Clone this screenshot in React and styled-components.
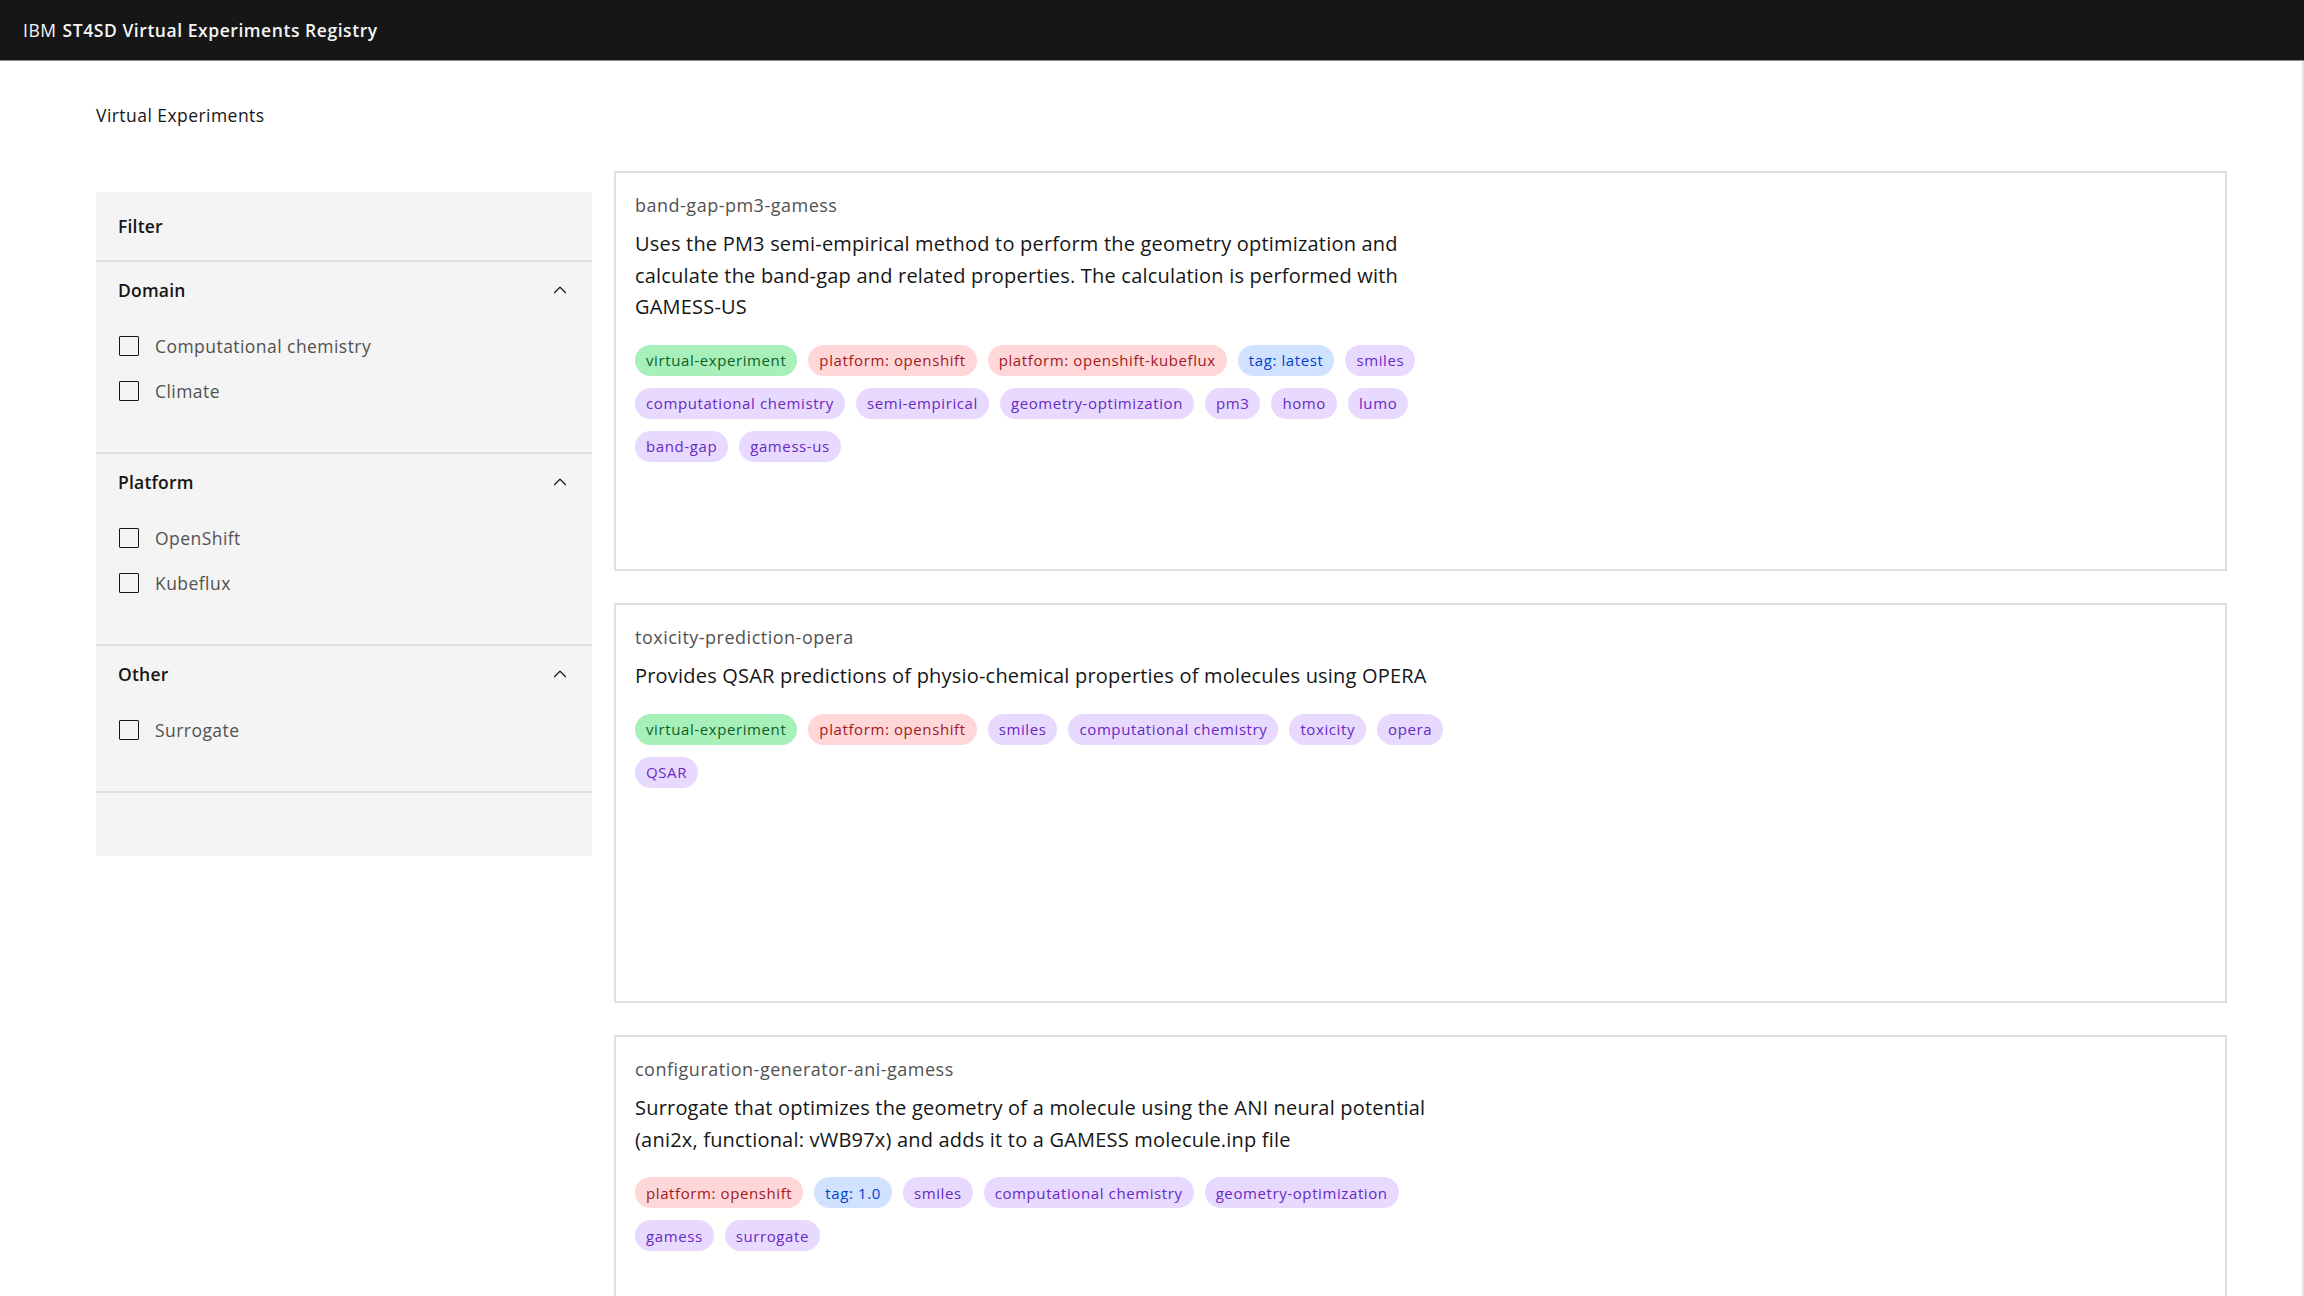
import React from 'react';
import styled, { createGlobalStyle } from 'styled-components';

const GlobalStyle = createGlobalStyle`
  html, body {
    margin: 0;
    padding: 0;
    background: #fff;
    overflow: hidden;
  }
  body {
    font-family: "Open Sans", "Noto Sans", sans-serif;
    color: #161616;
  }
  * { box-sizing: border-box; }
`;

const TAG_COLORS = {
    green: { bg: '#a7f0ba', fg: '#0e6027' },
    red: { bg: '#ffd7d9', fg: '#a2191f' },
    blue: { bg: '#d0e2ff', fg: '#0043ce' },
    purple: { bg: '#e8daff', fg: '#6929c4' },
};

const filters = [
    { title: 'Domain', options: ['Computational chemistry', 'Climate'] },
    { title: 'Platform', options: ['OpenShift', 'Kubeflux'] },
    { title: 'Other', options: ['Surrogate'] },
];

const experiments = [
    {
        name: 'band-gap-pm3-gamess',
        description: 'Uses the PM3 semi-empirical method to perform the geometry optimization and calculate the band-gap and related properties. The calculation is performed with GAMESS-US',
        tags: [
            ['virtual-experiment', 'green'],
            ['platform: openshift', 'red'],
            ['platform: openshift-kubeflux', 'red'],
            ['tag: latest', 'blue'],
            'smiles', 'computational chemistry', 'semi-empirical', 'geometry-optimization',
            'pm3', 'homo', 'lumo', 'band-gap', 'gamess-us',
        ],
    },
    {
        name: 'toxicity-prediction-opera',
        description: 'Provides QSAR predictions of physio-chemical properties of molecules using OPERA',
        tags: [
            ['virtual-experiment', 'green'],
            ['platform: openshift', 'red'],
            'smiles', 'computational chemistry', 'toxicity', 'opera', 'QSAR',
        ],
    },
    {
        name: 'configuration-generator-ani-gamess',
        description: 'Surrogate that optimizes the geometry of a molecule using the ANI neural potential (ani2x, functional: vWB97x) and adds it to a GAMESS molecule.inp file',
        tags: [
            ['platform: openshift', 'red'],
            ['tag: 1.0', 'blue'],
            'smiles', 'computational chemistry', 'geometry-optimization', 'gamess', 'surrogate',
        ],
    },
];

const ChevronUp = () => (
    <svg width="20" height="20" viewBox="0 0 16 16" fill="#161616" aria-hidden="true">
        <path d="M8 5L13 10 12.3 10.7 8 6.4 3.7 10.7 3 10z"/>
    </svg>
);

const App = () => {
    return (
        <>
            <GlobalStyle/>
            <Header>
                <Brand>IBM</Brand>
                <BrandName>ST4SD Virtual Experiments Registry</BrandName>
            </Header>
            <Content>
                <PageTitle>Virtual Experiments</PageTitle>
                <Layout>
                    <Sidebar>
                        <FilterTitle>Filter</FilterTitle>
                        {filters.map(group => (
                            <Section key={group.title}>
                                <SectionHeading>
                                    <span>{group.title}</span>
                                    <IconBox><ChevronUp/></IconBox>
                                </SectionHeading>
                                <SectionBody>
                                    {group.options.map(opt => (
                                        <Option key={opt}>
                                            <Box/>
                                            <OptionLabel>{opt}</OptionLabel>
                                        </Option>
                                    ))}
                                </SectionBody>
                            </Section>
                        ))}
                        <SidebarFooter/>
                    </Sidebar>
                    <CardList>
                        {experiments.map(exp => (
                            <Card key={exp.name}>
                                <CardTitle>{exp.name}</CardTitle>
                                <Description>{exp.description}</Description>
                                <Tags>
                                    {exp.tags.map(t => {
                                        const [label, kind] = Array.isArray(t) ? t : [t, 'purple'];
                                        return <Tag key={label} kind={kind}>{label}</Tag>;
                                    })}
                                </Tags>
                            </Card>
                        ))}
                    </CardList>
                </Layout>
            </Content>
        </>
    );
};

const Header = styled.header`
  height: 61px;
  background: #161616;
  border-bottom: 1px solid #8d8d8d;
  display: flex;
  align-items: center;
  padding-left: 23px;
  color: #f4f4f4;
  font-size: 17.5px;
  letter-spacing: 0.55px;
`;

const Brand = styled.span`
  font-weight: 400;
  margin-right: 6px;
`;

const BrandName = styled.span`
  font-weight: 600;
`;

const Content = styled.main`
  padding: 42px 75px 0 96px;
  border-right: 2px solid #e2e2e2;
  height: calc(100vh - 61px);
`;

const PageTitle = styled.h1`
  margin: 0;
  font-size: 17.5px;
  font-weight: 400;
  line-height: 25px;
  letter-spacing: 0.45px;
  color: #161616;
`;

const Layout = styled.div`
  display: grid;
  grid-template-columns: 496px 1fr;
  column-gap: 22px;
  margin-top: 43px;
  align-items: start;
`;

const Sidebar = styled.aside`
  margin-top: 21px;
  background: #f4f4f4;
`;

const FilterTitle = styled.div`
  height: 70px;
  display: flex;
  align-items: center;
  padding: 0 22px;
  font-size: 17.5px;
  font-weight: 600;
  letter-spacing: 0.2px;
  border-bottom: 2px solid #e0e0e0;
`;

const Section = styled.section`
  border-bottom: 2px solid #e0e0e0;
`;

const SectionHeading = styled.div`
  height: 56px;
  display: flex;
  align-items: center;
  justify-content: space-between;
  padding: 0 22px;
  font-size: 17.5px;
  font-weight: 600;
  letter-spacing: 0.2px;
  color: #161616;
`;

const IconBox = styled.span`
  display: flex;
  width: 20px;
  height: 20px;
`;

const SectionBody = styled.div`
  padding: 5px 22px 39px 23px;
`;

const Option = styled.label`
  height: 45px;
  display: flex;
  align-items: center;
  gap: 16px;
`;

const Box = styled.span`
  width: 20px;
  height: 20px;
  border: 1.5px solid #161616;
  border-radius: 1px;
  flex: none;
`;

const OptionLabel = styled.span`
  font-size: 17.5px;
  letter-spacing: 0.45px;
  color: #525252;
`;

const SidebarFooter = styled.div`
  height: 63px;
`;

const CardList = styled.div`
  display: flex;
  flex-direction: column;
  gap: 32px;
`;

const Card = styled.article`
  height: 400px;
  flex: none;
  border: 2px solid #e0e0e0;
  padding: 20px 19px;
  background: #fff;
`;

const CardTitle = styled.div`
  font-size: 18px;
  line-height: 25px;
  letter-spacing: 0.5px;
  color: #525252;
`;

const Description = styled.p`
  margin: 10px 0 22px;
  max-width: 835px;
  font-size: 20px;
  line-height: 31.5px;
  letter-spacing: 0.2px;
  color: #161616;
`;

const Tags = styled.div`
  display: flex;
  flex-wrap: wrap;
  column-gap: 11px;
  row-gap: 12px;
  max-width: 835px;
`;

const Tag = styled.span`
  display: inline-flex;
  align-items: center;
  height: 31px;
  padding: 0 11px;
  border-radius: 16px;
  font-size: 15px;
  letter-spacing: 0.6px;
  background: ${p => TAG_COLORS[p.kind].bg};
  color: ${p => TAG_COLORS[p.kind].fg};
`;

export default App;
